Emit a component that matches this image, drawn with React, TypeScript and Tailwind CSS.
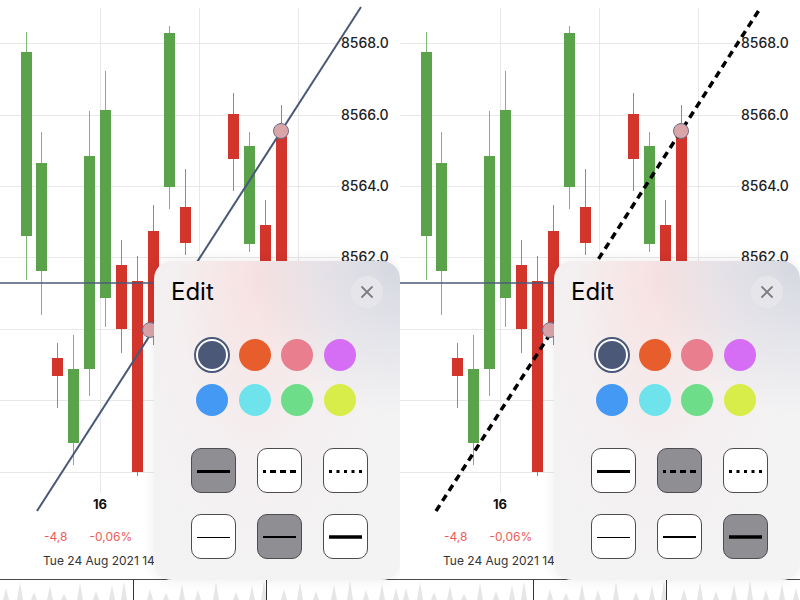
import clsx from "clsx";

type Candle = [number, number, number, number, number, "g" | "r"];

// cx, body top, body bottom, wick top, wick bottom, colour
const CANDLES: Candle[] = [
  [26, 52, 236, 32, 280, "g"],
  [41, 163, 271, 132, 315, "g"],
  [57, 358, 376, 343, 408, "r"],
  [73, 369, 443, 335, 465, "g"],
  [89, 156, 369, 111, 396, "g"],
  [105, 110, 298, 71, 327, "g"],
  [121, 265, 329, 240, 353, "r"],
  [137, 281, 472, 256, 476, "r"],
  [153, 231, 335, 205, 345, "r"],
  [169, 33, 187, 26, 209, "g"],
  [185, 207, 243, 169, 255, "r"],
  [201, 300, 380, 280, 400, "g"],
  [217, 320, 420, 300, 440, "r"],
  [233, 114, 159, 93, 191, "r"],
  [249, 146, 244, 132, 252, "g"],
  [265, 225, 300, 200, 320, "r"],
  [281, 133, 320, 105, 340, "r"],
];

const GRID_Y = [43, 115, 186, 257, 329, 400, 472];
const PRICES: [number, string][] = [
  [43, "8568.0"],
  [115, "8566.0"],
  [186, "8564.0"],
  [257, "8562.0"],
];

const SWATCHES = [
  "#4b5878",
  "#e85d2c",
  "#e97f8e",
  "#d56ef5",
  "#4499f5",
  "#6ee3ec",
  "#6edd8a",
  "#d8ec4a",
];

const SPIKES: [number, number][] = [
  [6, 12], [20, 18], [34, 8], [50, 14], [64, 6], [80, 17], [96, 9], [112, 15],
  [124, 19], [150, 11], [166, 7], [182, 16], [198, 10], [216, 18], [236, 8],
  [252, 14], [264, 19], [284, 11], [300, 17], [316, 9], [334, 15], [350, 19],
  [366, 10], [382, 16], [396, 12],
];

function Chart({ dashed }: { dashed: boolean }) {
  return (
    <svg width="400" height="520" viewBox="0 0 400 520" className="block shrink-0">
      {GRID_Y.map((y) => (
        <line key={y} x1="0" y1={y + 0.5} x2="340" y2={y + 0.5} stroke="#e8e8e8" strokeWidth="1" />
      ))}
      {[100, 199, 298].map((x) => (
        <line key={x} x1={x + 0.5} y1="8" x2={x + 0.5} y2="493" stroke="#e8e8e8" strokeWidth="1" />
      ))}
      {PRICES.map(([y, t]) => (
        <text key={t} x="341" y={y + 5} fontSize="14" fontWeight="500" fill="#222">
          {t}
        </text>
      ))}
      <text x="100" y="509" fontSize="13" fontWeight="700" fill="#111" textAnchor="middle">
        16
      </text>
      {CANDLES.map(([cx, bt, bb, wt, wb, c]) => (
        <g key={cx}>
          <line
            x1={cx + 0.5}
            y1={wt}
            x2={cx + 0.5}
            y2={wb}
            stroke={c === "g" ? "#7fb872" : "#dc6a63"}
            strokeWidth="1"
          />
          <rect
            x={cx - 5}
            y={bt}
            width="11"
            height={bb - bt}
            fill={c === "g" ? "#5aa34b" : "#d2352c"}
          />
        </g>
      ))}
      <line x1="0" y1="283" x2="400" y2="283" stroke="#4b5878" strokeWidth="1.5" />
      {dashed ? (
        <line
          x1="36"
          y1="511"
          x2="361"
          y2="7"
          stroke="#000"
          strokeWidth="3.5"
          strokeDasharray="7 5"
        />
      ) : (
        <line x1="37" y1="511" x2="361" y2="7" stroke="#4b5878" strokeWidth="2" />
      )}
      <circle cx="150" cy="330" r="7.5" fill="#d9a5a8" stroke="#6b708c" strokeWidth="1" />
      <circle cx="281" cy="131" r="7.5" fill="#d9a5a8" stroke="#6b708c" strokeWidth="1" />
    </svg>
  );
}

const LINE_STYLES = [
  { w: 3, y: 4.5, dash: undefined },
  { w: 3, y: 4.5, dash: "3 4 6 4 6 4 6" },
  { w: 3, y: 4.5, dash: "3 4.5" },
  { w: 1, y: 4.5, dash: undefined },
  { w: 2, y: 4, dash: undefined },
  { w: 3.5, y: 4, dash: undefined },
];

function LineButton({ kind, active }: { kind: number; active: boolean }) {
  const s = LINE_STYLES[kind];
  return (
    <div
      className={clsx(
        "size-[45px] rounded-[10px] border-[1.5px] border-[#4d4d50] flex items-center justify-center",
        active ? "bg-[#8e8e93]" : "bg-white"
      )}
    >
      <svg width="33" height="8" viewBox="0 0 33 8">
        <line x1="0" y1={s.y} x2="33" y2={s.y} stroke="#000" strokeWidth={s.w} strokeDasharray={s.dash} />
      </svg>
    </div>
  );
}

function EditPopover({ selected }: { selected: number[] }) {
  return (
    <div className="absolute left-[154px] top-[261px] w-[246px] h-[319px] rounded-[18px] shadow-[0_0_14px_rgba(0,0,0,0.08)] bg-[radial-gradient(circle_at_100%_0%,rgba(205,208,220,0.8),transparent_38%),radial-gradient(ellipse_at_42%_6%,#f8e1e1_0%,#f4eff0_40%,#f3f3f4_75%)] flex flex-col">
      <div className="flex items-center justify-between pl-[17px] pr-[17px] pt-[15px]">
        <span className="text-[24px] leading-[32px] text-black">Edit</span>
        <div className="size-8 rounded-full bg-[#e6e6ea] flex items-center justify-center">
          <svg width="12" height="12" viewBox="0 0 12 12">
            <path d="M1 1 L11 11 M11 1 L1 11" stroke="#7c7c82" strokeWidth="1.8" strokeLinecap="round" />
          </svg>
        </div>
      </div>
      <div className="mt-[31px] pl-[42px] grid grid-cols-[repeat(4,32px)] gap-x-[10.7px] gap-y-[13px]">
        {SWATCHES.map((c, i) =>
          i === 0 ? (
            <div
              key={c}
              className="size-9 -m-0.5 rounded-full border-[2.5px] border-[#4b5878] p-[2px] bg-white"
            >
              <div className="size-full rounded-full bg-[#4b5878]" />
            </div>
          ) : (
            <div key={c} className="size-8 rounded-full" style={{ backgroundColor: c }} />
          )
        )}
      </div>
      <div className="mt-[32px] pl-[37px] grid grid-cols-[repeat(3,45px)] gap-[21px]">
        {[0, 1, 2, 3, 4, 5].map((k) => (
          <LineButton key={k} kind={k} active={selected.includes(k)} />
        ))}
      </div>
    </div>
  );
}

function Footer() {
  return (
    <div className="mt-auto h-[21px] border-t border-[#4a4a4a]">
      <svg width="400" height="20" viewBox="0 0 400 20" className="block">
        {SPIKES.map(([x, h]) => (
          <polygon key={x} points={`${x - 3},20 ${x},${20 - h} ${x + 3},20`} fill="#e6e6e6" />
        ))}
        <line x1="133.5" y1="0" x2="133.5" y2="20" stroke="#333" strokeWidth="1" />
        <line x1="266.5" y1="0" x2="266.5" y2="20" stroke="#333" strokeWidth="1" />
      </svg>
    </div>
  );
}

function Panel({ dashed, selected }: { dashed: boolean; selected: number[] }) {
  return (
    <div className="relative w-[400px] h-[600px] overflow-hidden flex flex-col bg-white">
      <Chart dashed={dashed} />
      <div className="pt-[8px] pl-[44px] flex gap-[22px] text-[12px] leading-[18px] text-[#ee5a55]">
        <span>-4,8</span>
        <span>-0,06%</span>
      </div>
      <div className="mt-[7px] pl-[43px] text-[12px] leading-[16px] text-[#333]">
        Tue 24 Aug 2021 14:30
      </div>
      <Footer />
      <EditPopover selected={selected} />
    </div>
  );
}

export default function App() {
  return (
    <div className="flex w-[800px] h-[600px] bg-white font-['Inter',sans-serif]">
      <Panel dashed={false} selected={[0, 4]} />
      <Panel dashed={true} selected={[1, 5]} />
    </div>
  );
}
